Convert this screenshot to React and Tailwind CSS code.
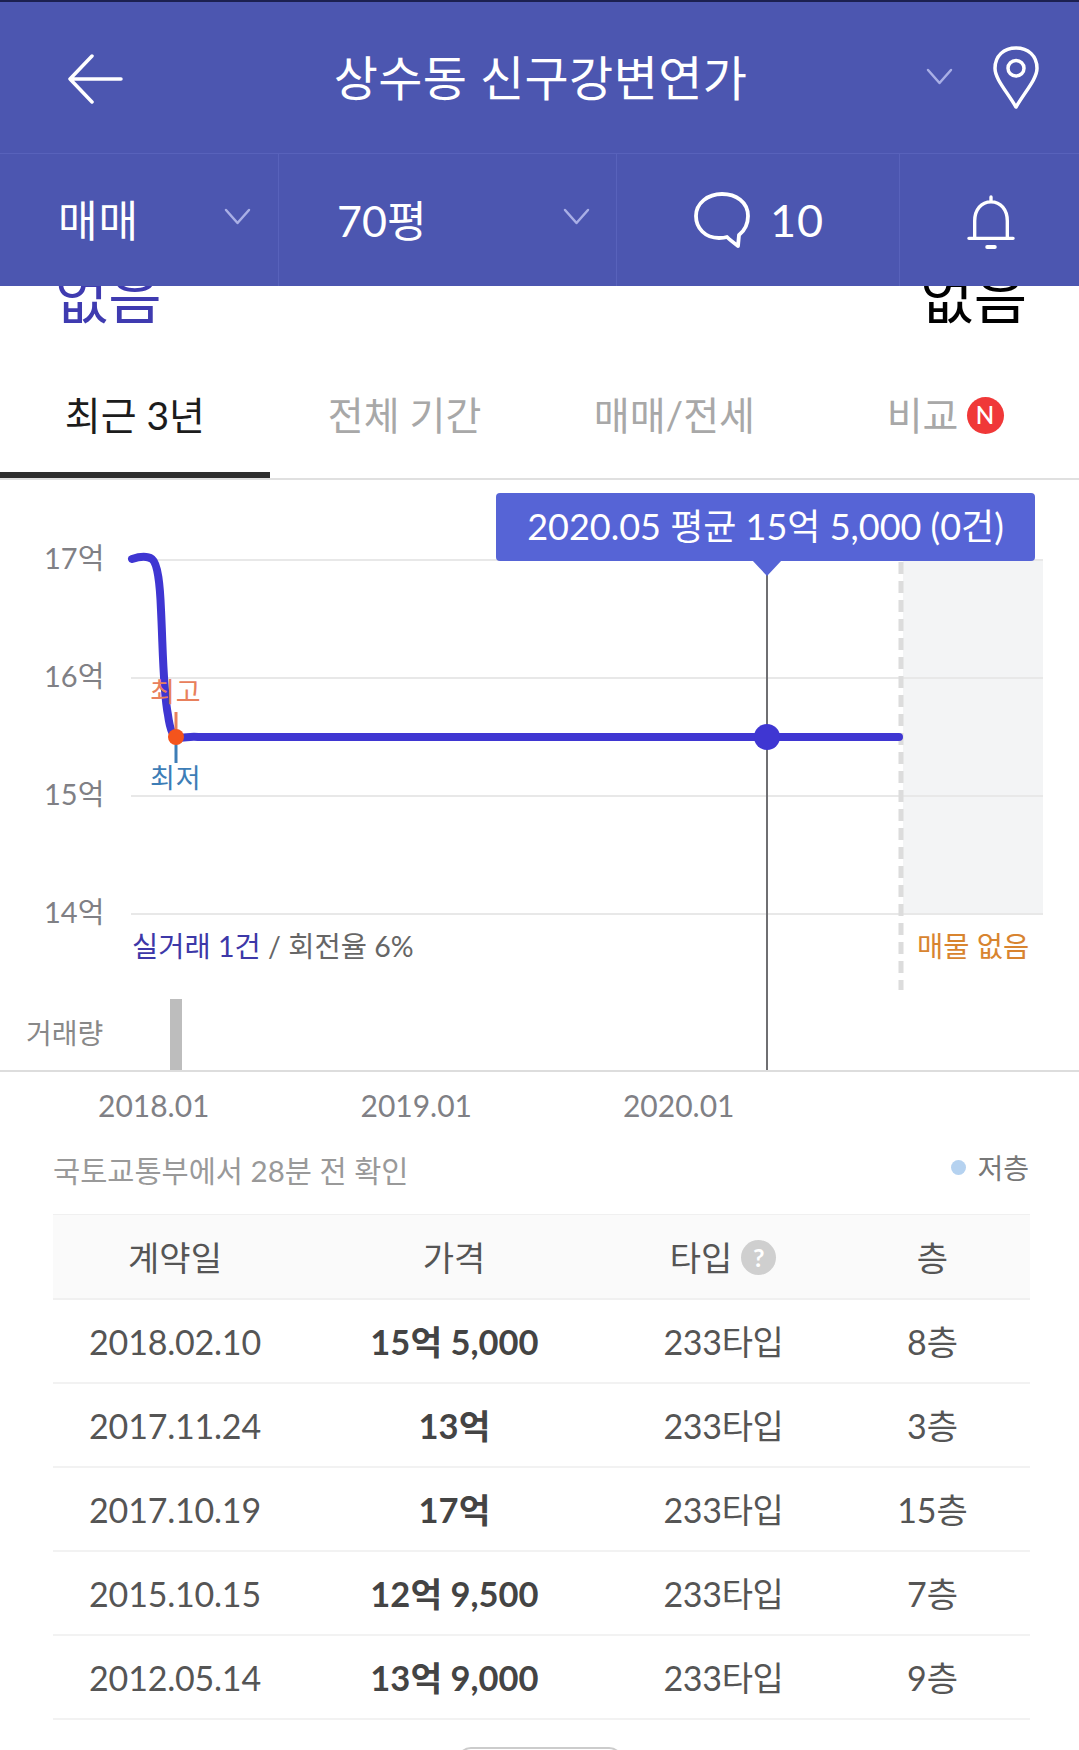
const FONT = "font-['Lato','Noto_Sans_CJK_KR',sans-serif]";

function Chevron({ className }) {
  return (
    <svg className={className} width="27" height="17" viewBox="0 0 27 17" fill="none" stroke="#a9afe6" strokeWidth="2.5" strokeLinecap="round" strokeLinejoin="round">
      <path d="M2 2 L13.5 15 L25 2" />
    </svg>
  );
}

function Header() {
  return (
    <header className="bg-[#4c56b0] text-white border-t-2 border-[#1c2050]">
      <div className="h-[152px] relative flex items-center justify-center border-b border-[#5862bb]">
        <svg className="absolute left-[66px] top-[52px]" width="58" height="50" viewBox="0 0 58 50" fill="none" stroke="#fff" strokeWidth="3.5" strokeLinecap="round" strokeLinejoin="round">
          <path d="M26 2 L4 25 L26 48 M4 25 H55" />
        </svg>
        <h1 className="text-[48px] font-normal tracking-[0.4px] leading-none pl-[2px]">상수동 신구강변연가</h1>
        <Chevron className="absolute left-[926px] top-[66px]" />
        <svg className="absolute left-[992px] top-[44px]" width="48" height="64" viewBox="0 0 48 66" preserveAspectRatio="none" fill="none" stroke="#fff" strokeWidth="3.5" strokeLinejoin="round">
          <path d="M24 63 C15 47 3 34 3 23 C3 10 12 2 24 2 C36 2 45 10 45 23 C45 34 33 47 24 63 Z" />
          <circle cx="24" cy="23" r="8" />
        </svg>
      </div>
      <div className="h-[132px] flex">
        <div className="w-[279px] border-r border-[#5862bb] relative flex items-center pl-[58px]">
          <span className="text-[43px] tracking-[1px] leading-none">매매</span>
          <Chevron className="absolute left-[224px] top-[54px]" />
        </div>
        <div className="w-[338px] border-r border-[#5862bb] relative flex items-center pl-[58px]">
          <span className="text-[43px] leading-none">70평</span>
          <Chevron className="absolute left-[284px] top-[54px]" />
        </div>
        <div className="w-[283px] border-r border-[#5862bb] flex items-center pl-[76px] gap-[19px]">
          <svg width="58" height="58" viewBox="0 0 58 58" fill="none" stroke="#fff" strokeWidth="3.8" strokeLinejoin="round">
            <path d="M29 3 C43 3 55 11 55 25 C55 34 51 40 46 44 L45 55 C41 52 37 49 34 46 C31 47 28 47 26 47 C12 47 3 37 3 25 C3 12 15 3 29 3 Z" />
          </svg>
          <span className="text-[45px] leading-none tracking-[1px]">10</span>
        </div>
        <div className="flex-1 flex items-center justify-center pt-[3px] pl-[2px]">
          <svg width="48" height="56" viewBox="0 0 50 56" fill="none" stroke="#fff" strokeWidth="3.5" strokeLinecap="round" strokeLinejoin="round">
            <path d="M25 2 V7 M2 45 H48 M8 45 V27 C8 15 15 7 25 7 C35 7 42 15 42 27 V45" />
            <path d="M21 54 H29" strokeWidth="4" />
          </svg>
        </div>
      </div>
    </header>
  );
}

function ClippedRow() {
  return (
    <div className="h-[56px] overflow-hidden relative flex justify-between items-end pl-[55px] pr-[52px]">
      <span className="text-[58px] leading-none text-[#3f3bb0] mb-[16px]">없음</span>
      <span className="text-[58px] leading-none text-black mb-[16px]">없음</span>
    </div>
  );
}

function Tabs() {
  return (
    <div className="h-[138px] grid grid-cols-4 border-b-2 border-[#e0e0e0] text-[39px] leading-none">
      <div className="flex items-center justify-center border-b-[6px] border-[#2e2e2e] text-[#1c1c1c] pt-[16px]">최근 3년</div>
      <div className="flex items-center justify-center text-[#a8a8a8] pt-[10px]">전체 기간</div>
      <div className="flex items-center justify-center text-[#a8a8a8] pt-[10px]">매매/전세</div>
      <div className="flex items-center justify-center text-[#a8a8a8] gap-[8px] pl-[2px] pt-[10px]">
        비교
        <span className="w-[37px] h-[37px] rounded-full bg-[#f03838] text-white text-[24px] font-semibold flex items-center justify-center">N</span>
      </div>
    </div>
  );
}

function Chart() {
  return (
    <div className="h-[591px] relative">
      <svg className="absolute inset-0" width="1079" height="591" viewBox="0 480 1079 591" fill="none">
        <rect x="903" y="560" width="140" height="354" fill="#f3f4f5" />
        <path d="M131 560 H1043 M131 678 H1043 M131 796 H1043 M131 914 H1043" stroke="#e8e8e8" strokeWidth="2" />
        <path d="M901 562 V990" stroke="#dcdcdc" strokeWidth="5" strokeDasharray="12 7" />
        <path d="M767 570 V1070" stroke="#6f6f72" strokeWidth="2" />
        <path d="M752 560 H782 L767 576 Z" fill="#5664d6" />
        <path d="M132 559 C138 557 146 555 152 559 C158 564 160 585 161 610 C163 650 163 690 168 715 C170 730 173 737 177 738 C186 738 190 736 198 737 H899" stroke="#3f36d2" strokeWidth="8" strokeLinecap="round" strokeLinejoin="round" />
        <path d="M176 712 V732" stroke="#e8805c" strokeWidth="3" />
        <path d="M176 742 V763" stroke="#3d7db6" strokeWidth="3" />
        <circle cx="176" cy="737" r="8" fill="#f4541c" />
        <circle cx="767" cy="737" r="13" fill="#3f36d2" />
        <rect x="170" y="999" width="12" height="71" fill="#bdbdbd" />
      </svg>
      <div className="absolute left-[496px] top-[13px] w-[539px] h-[68px] bg-[#5664d6] rounded-[4px] text-white text-[36px] flex items-center justify-center leading-none pb-[2px]">
        2020.05 평균 15억 5,000 (0건)
      </div>
      <span className="absolute left-[44px] top-[60px] text-[29px] leading-[36px] text-[#808085]">17억</span>
      <span className="absolute left-[44px] top-[178px] text-[29px] leading-[36px] text-[#808085]">16억</span>
      <span className="absolute left-[44px] top-[296px] text-[29px] leading-[36px] text-[#808085]">15억</span>
      <span className="absolute left-[44px] top-[414px] text-[29px] leading-[36px] text-[#808085]">14억</span>
      <span className="absolute left-[150px] top-[196px] text-[27px] leading-[32px] tracking-[1px] text-[#e8805c]">최고</span>
      <span className="absolute left-[150px] top-[282px] text-[27px] leading-[32px] tracking-[1px] text-[#3d7db6]">최저</span>
      <span className="absolute left-[132px] top-[448px] text-[28.5px] leading-[36px] text-[#666]"><span className="text-[#3d38a8]">실거래 1건</span> / 회전율 6%</span>
      <span className="absolute left-[917px] top-[448px] text-[28.5px] leading-[36px] text-[#d8842f]">매물 없음</span>
      <span className="absolute left-[26px] top-[535px] text-[28px] leading-[36px] text-[#888]">거래량</span>
    </div>
  );
}

function XAxis() {
  return (
    <div className="border-t-2 border-[#dddddd] -mt-[1px] h-[72px] relative text-[30px] leading-none text-[#808085]">
      <div className="flex pl-[98px] gap-[151px] pt-[18px]">
        <span>2018.01</span>
        <span>2019.01</span>
        <span>2020.01</span>
      </div>
    </div>
  );
}

const rows = [
  ["2018.02.10", "15억 5,000", "8층"],
  ["2017.11.24", "13억", "3층"],
  ["2017.10.19", "17억", "15층"],
  ["2015.10.15", "12억 9,500", "7층"],
  ["2012.05.14", "13억 9,000", "9층"],
];

function Deals() {
  return (
    <div className="pl-[53px] pr-[49px]">
      <div className="flex justify-between items-center h-[72px] pb-[15px]">
        <span className="text-[29.5px] text-[#999] leading-none">국토교통부에서 28분 전 확인</span>
        <span className="flex items-center gap-[11px] text-[28px] text-[#777] leading-none -mt-[6px] mr-[1px]">
          <span className="w-[15px] h-[15px] rounded-full bg-[#b5d2f0]"></span>저층
        </span>
      </div>
      <div className="grid grid-cols-[244px_314px_224px_195px] h-[86px] pt-[2px] bg-[#fafafa] border-t border-b-2 border-[#f0f0f0] items-center text-center text-[34px] text-[#555]">
        <span>계약일</span>
        <span>가격</span>
        <span className="flex items-center justify-center gap-[9px]">
          타입
          <span className="w-[35px] h-[35px] rounded-full bg-[#cfcfcf] text-white text-[25px] font-bold flex items-center justify-center">?</span>
        </span>
        <span>층</span>
      </div>
      {rows.map((r) => (
        <div key={r[0]} className="grid grid-cols-[244px_314px_224px_195px] h-[84px] pt-[2px] border-b-2 border-[#f2f2f2] items-center text-center text-[34px] text-[#555] leading-none">
          <span className="tracking-[-0.2px]">{r[0]}</span>
          <span className="font-bold text-[34.5px] text-[#444] pl-[1px]">{r[1]}</span>
          <span className="tracking-[-0.3px] pl-[1px]">233타입</span>
          <span>{r[2]}</span>
        </div>
      ))}
      <div className="flex justify-center pt-[27px]">
        <div className="w-[166px] h-[40px] rounded-t-[14px] border-2 border-[#cccccc] -ml-[4px]"></div>
      </div>
    </div>
  );
}

export default function App() {
  return (
    <div className={`w-[1079px] h-[1750px] overflow-hidden bg-white ${FONT}`}>
      <Header />
      <ClippedRow />
      <Tabs />
      <Chart />
      <XAxis />
      <Deals />
    </div>
  );
}
